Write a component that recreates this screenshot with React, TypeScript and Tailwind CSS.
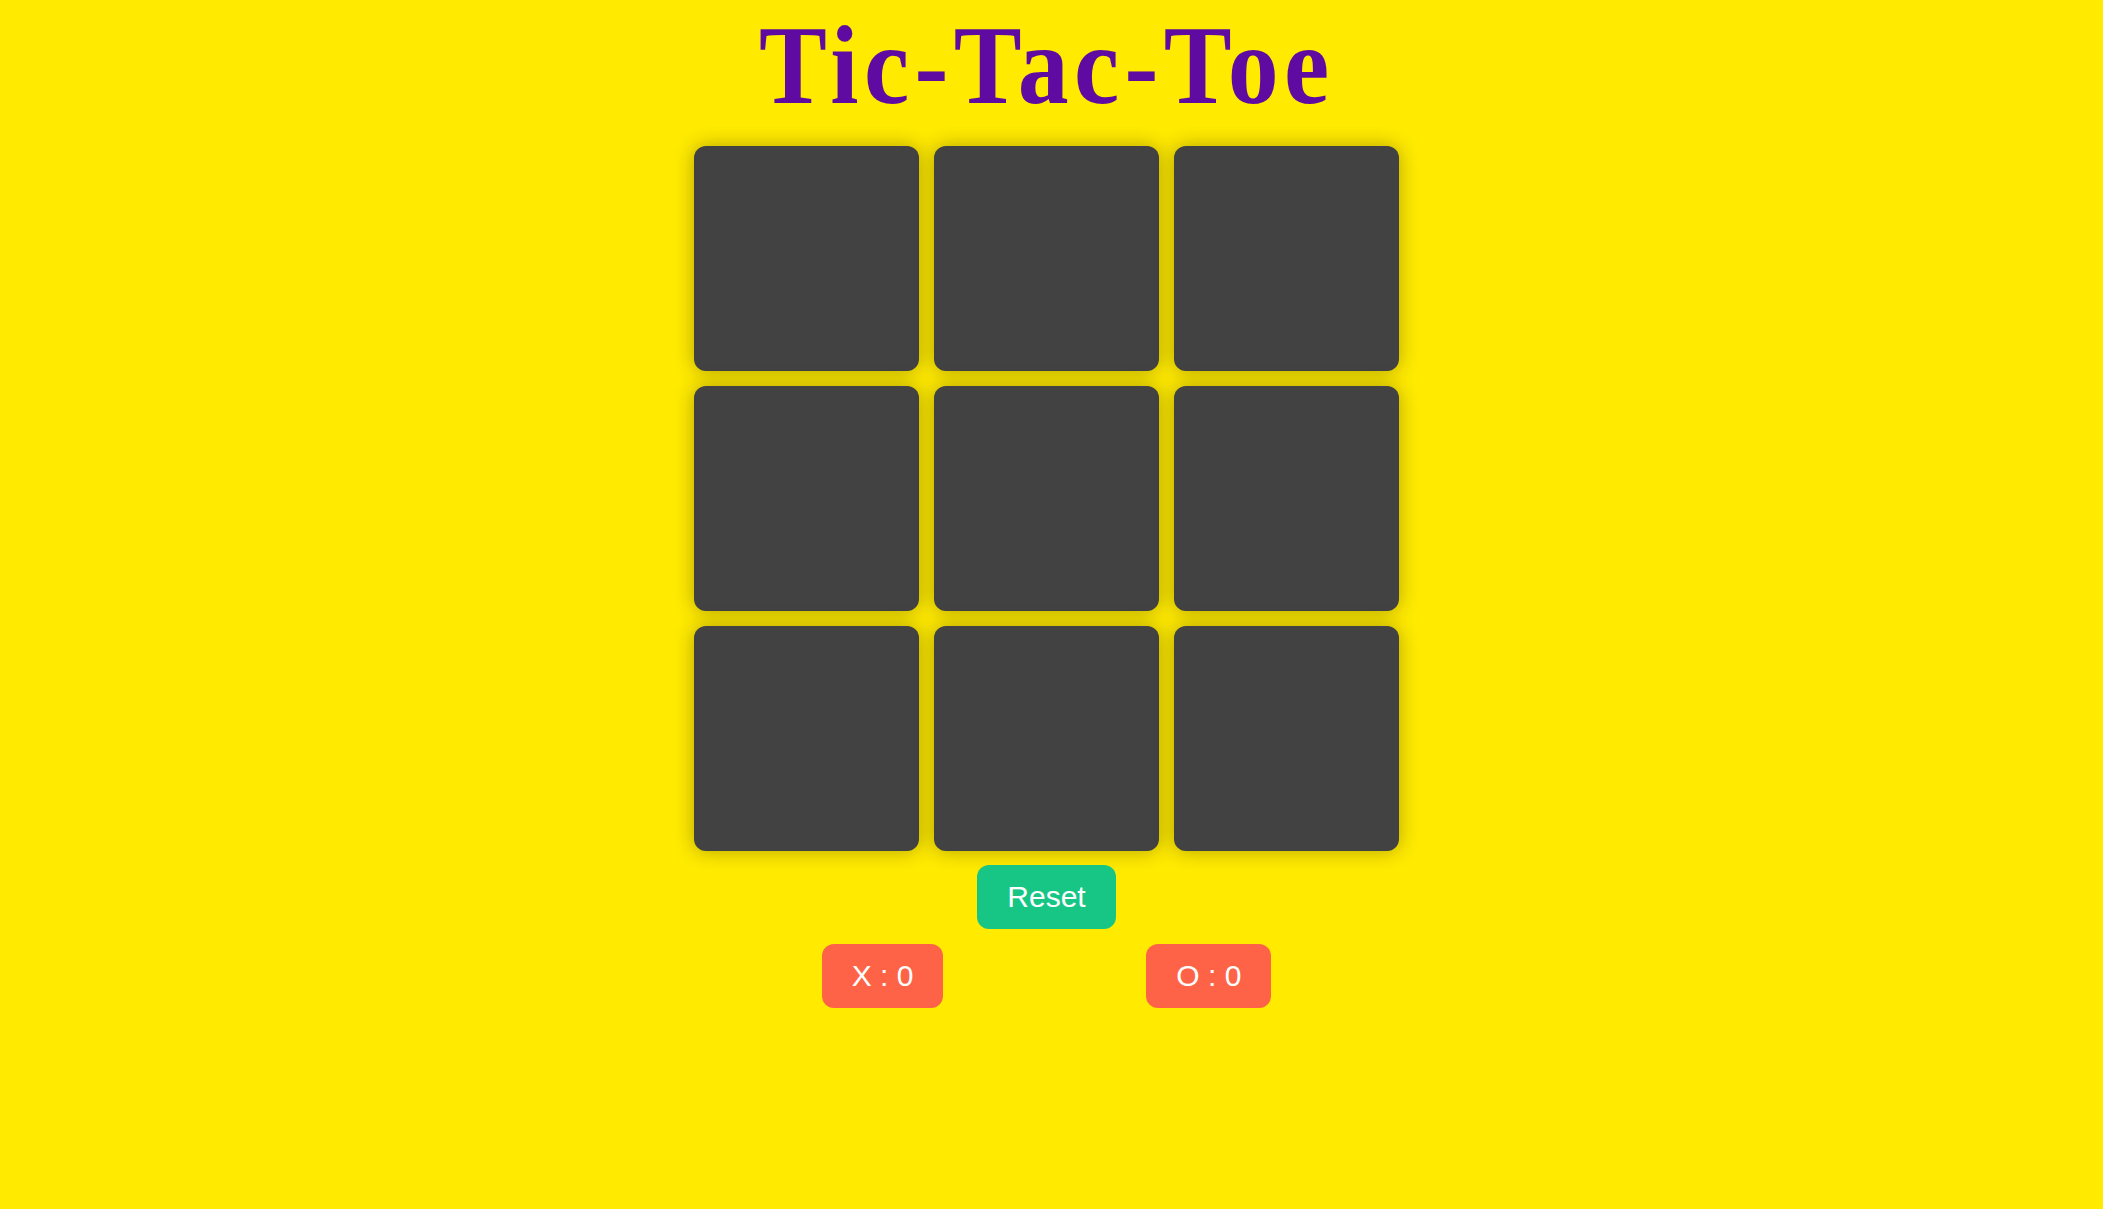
import React, { useState } from 'react';

type Cell = 'X' | 'O' | null;

export default function App() {
  const [board, setBoard] = useState<Cell[]>(Array(9).fill(null));
  const [turn, setTurn] = useState<'X' | 'O'>('X');
  const [scores] = useState({ X: 0, O: 0 });

  const play = (i: number) => {
    if (board[i]) return;
    const next = [...board];
    next[i] = turn;
    setBoard(next);
    setTurn(turn === 'X' ? 'O' : 'X');
  };

  const reset = () => {
    setBoard(Array(9).fill(null));
    setTurn('X');
  };

  return (
    <div className="min-h-screen w-full bg-[#ffea00] pr-[10px] pt-[8px] font-['Liberation_Sans',Arial,sans-serif]">
      <div className="flex flex-col items-center">
        <h1 className="mb-[25px] scale-x-[0.9] text-[113px] font-bold leading-none tracking-[6px] text-[#5f0aa0] font-['Liberation_Serif','Times_New_Roman',serif]">
          Tic-Tac-Toe
        </h1>

        <div className="grid grid-cols-[repeat(3,225px)] gap-[15px]">
          {board.map((c, i) => (
            <button
              key={i}
              onClick={() => play(i)}
              className="flex h-[225px] w-[225px] items-center justify-center rounded-[12px] bg-[#424242] text-[96px] font-bold text-white shadow-[0_0_20px_rgba(0,0,0,0.3)]"
            >
              {c}
            </button>
          ))}
        </div>

        <button
          onClick={reset}
          className="mt-[14px] rounded-[12px] bg-[#17c685] px-[30px] py-[15px] text-[30px] leading-[34px] text-white"
        >
          Reset
        </button>

        <div className="mt-[15px] flex gap-[203px]">
          <div className="rounded-[12px] bg-[#ff6347] px-[30px] py-[15px] text-[30px] leading-[34px] text-white">
            X : {scores.X}
          </div>
          <div className="rounded-[12px] bg-[#ff6347] px-[30px] py-[15px] text-[30px] leading-[34px] text-white">
            O : {scores.O}
          </div>
        </div>
      </div>
    </div>
  );
}
